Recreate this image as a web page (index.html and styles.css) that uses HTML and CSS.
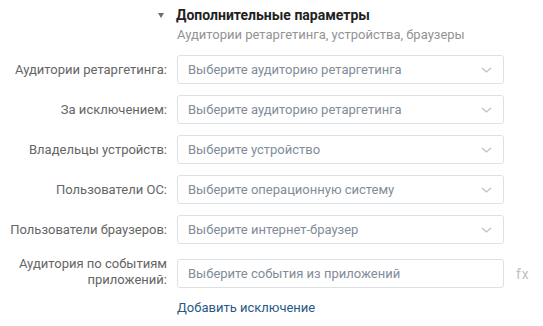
FILE: index.html
```html
<!DOCTYPE html>
<html lang="ru">
<head>
<meta charset="utf-8">
<link rel="stylesheet" href="styles.css">
</head>
<body>
<div class="panel">
  <div class="head">
    <div class="head-title"><span class="tri"></span><span class="title">Дополнительные параметры</span></div>
    <div class="subtitle">Аудитории ретаргетинга, устройства, браузеры</div>
  </div>
  <div class="rows">
    <div class="row">
      <div class="label">Аудитории ретаргетинга:</div>
      <div class="select"><span class="ph">Выберите аудиторию ретаргетинга</span><svg class="chev" width="11" height="6" viewBox="0 0 11 6"><path d="M1 1l4.5 4 4.5-4" fill="none" stroke="#b8c1cc" stroke-width="1.3"/></svg></div>
    </div>
    <div class="row">
      <div class="label">За исключением:</div>
      <div class="select"><span class="ph">Выберите аудиторию ретаргетинга</span><svg class="chev" width="11" height="6" viewBox="0 0 11 6"><path d="M1 1l4.5 4 4.5-4" fill="none" stroke="#b8c1cc" stroke-width="1.3"/></svg></div>
    </div>
    <div class="row">
      <div class="label">Владельцы устройств:</div>
      <div class="select"><span class="ph">Выберите устройство</span><svg class="chev" width="11" height="6" viewBox="0 0 11 6"><path d="M1 1l4.5 4 4.5-4" fill="none" stroke="#b8c1cc" stroke-width="1.3"/></svg></div>
    </div>
    <div class="row">
      <div class="label">Пользователи ОС:</div>
      <div class="select"><span class="ph">Выберите операционную систему</span><svg class="chev" width="11" height="6" viewBox="0 0 11 6"><path d="M1 1l4.5 4 4.5-4" fill="none" stroke="#b8c1cc" stroke-width="1.3"/></svg></div>
    </div>
    <div class="row">
      <div class="label">Пользователи браузеров:</div>
      <div class="select"><span class="ph">Выберите интернет-браузер</span><svg class="chev" width="11" height="6" viewBox="0 0 11 6"><path d="M1 1l4.5 4 4.5-4" fill="none" stroke="#b8c1cc" stroke-width="1.3"/></svg></div>
    </div>
    <div class="row row-events">
      <div class="label label-2">Аудитория по событиям<br>приложений:</div>
      <div class="select"><span class="ph">Выберите события из приложений</span></div>
      <span class="fx">fx</span>
    </div>
    <div class="row row-link">
      <div class="label"></div>
      <a class="link">Добавить исключение</a>
    </div>
  </div>
</div>
</body>
</html>
```

FILE: styles.css
```css
* { box-sizing: border-box; }
html, body { margin: 0; padding: 0; background: #fff; }
body {
  font-family: Roboto, "Liberation Sans", sans-serif;
  font-size: 13px;
  color: #656565;
  width: 543px;
  height: 326px;
  overflow: hidden;
}
.panel { padding-top: 6px; }
.head { padding-left: 158px; }
.head-title { display: flex; align-items: center; height: 18px; }
.tri {
  width: 0; height: 0;
  border-left: 3.5px solid transparent;
  border-right: 3.5px solid transparent;
  border-top: 5px solid #6d6d6d;
  margin-right: 12px;
}
.title { font-size: 14px; font-weight: 700; color: #222; }
.subtitle { padding-left: 19px; margin-top: 3px; color: #939393; line-height: 16px; }
.rows { display: flex; flex-direction: column; gap: 11px; margin-top: 12px; }
.row { display: flex; align-items: center; gap: 10px; }
.label { width: 167px; text-align: right; flex: none; line-height: 16px; }
.select {
  width: 327px; height: 29px;
  border: 1px solid #dce1e6;
  border-radius: 3px;
  display: flex; align-items: center; justify-content: space-between;
  padding: 0 11px 0 10px;
  flex: none;
}
.ph { color: #818c99; }
.chev { display: block; }
.row-events { margin-top: 4px; }
.label-2 { align-self: center; margin-top: -4px; }
.fx { color: #c0c0c0; font-size: 14px; margin-left: 2px; letter-spacing: 1px; }
.row-link { margin-top: 1px; }
.link { color: #2a5885; text-decoration: none; }
```
